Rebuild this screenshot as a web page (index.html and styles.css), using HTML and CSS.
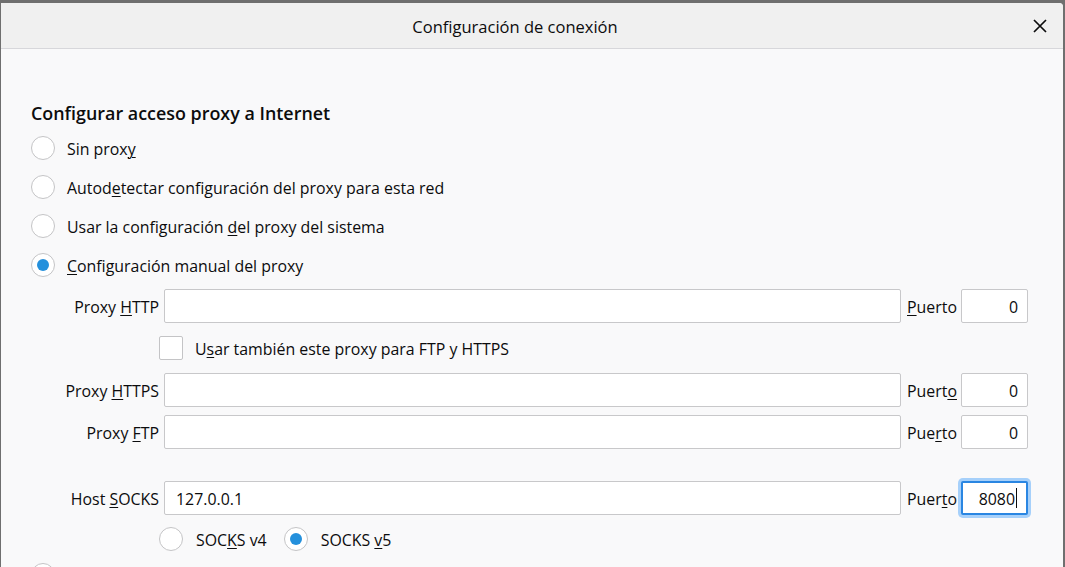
FILE: index.html
```html
<!DOCTYPE html>
<html lang="es">
<head>
<meta charset="utf-8">
<title>Configuración de conexión</title>
<link rel="stylesheet" href="styles.css">
</head>
<body>
<div class="dialog">
  <header class="titlebar">
    <h1 class="title">Configuración de conexión</h1>
    <button class="close" aria-label="Cerrar">
      <svg width="14" height="14" viewBox="0 0 14 14"><path d="M1 1 L13 13 M13 1 L1 13" stroke="#0c0c0d" stroke-width="1.7" fill="none"/></svg>
    </button>
  </header>
  <main class="content">
    <h2 class="section-title">Configurar acceso proxy a Internet</h2>
    <div class="radio-list">
      <div class="radio-row"><span class="radio"></span><span class="txt">Sin prox<u>y</u></span></div>
      <div class="radio-row"><span class="radio"></span><span class="txt">Autod<u>e</u>tectar configuración del proxy para esta red</span></div>
      <div class="radio-row"><span class="radio"></span><span class="txt">Usar la configuración <u>d</u>el proxy del sistema</span></div>
      <div class="radio-row"><span class="radio checked"></span><span class="txt"><u>C</u>onfiguración manual del proxy</span></div>
    </div>
    <div class="manual">
      <div class="proxy-row">
        <span class="field-label txt">Proxy <u>H</u>TTP</span>
        <span class="input"></span>
        <span class="port-label txt"><u>P</u>uerto</span>
        <span class="input port"><span class="txt">0</span></span>
      </div>
      <div class="check-row"><span class="checkbox"></span><span class="txt">U<u>s</u>ar también este proxy para FTP y HTTPS</span></div>
      <div class="proxy-row">
        <span class="field-label txt">Proxy <u>H</u>TTPS</span>
        <span class="input"></span>
        <span class="port-label txt">Puert<u>o</u></span>
        <span class="input port"><span class="txt">0</span></span>
      </div>
      <div class="proxy-row gap-small">
        <span class="field-label txt">Proxy <u>F</u>TP</span>
        <span class="input"></span>
        <span class="port-label txt">Pue<u>r</u>to</span>
        <span class="input port"><span class="txt">0</span></span>
      </div>
      <div class="proxy-row gap-large">
        <span class="field-label txt">Host <u>S</u>OCKS</span>
        <span class="input text"><span class="txt">127.0.0.1</span></span>
        <span class="port-label txt">Puer<u>t</u>o</span>
        <span class="input port focused"><span class="txt">8080</span><span class="caret"></span></span>
      </div>
      <div class="socks-row">
        <div class="radio-row"><span class="radio"></span><span class="txt">SOC<u>K</u>S v4</span></div>
        <div class="radio-row"><span class="radio checked"></span><span class="txt">SOCKS <u>v</u>5</span></div>
      </div>
    </div>
    <div class="radio-list tail">
      <div class="radio-row"><span class="radio"></span></div>
    </div>
  </main>
</div>
</body>
</html>
```

FILE: styles.css
```css
* { box-sizing: border-box; }
html, body { margin: 0; padding: 0; height: 100%; overflow: hidden; }
body {
  background: #6f6f6f;
  font-family: "Open Sans", "Noto Sans", sans-serif;
  font-size: 15.9px;
  color: #0c0c0d;
  padding: 3px 2px 0 1px;
}
.dialog {
  height: 100%;
  background: #f9f9fa;
  border-top-right-radius: 4px;
  overflow: hidden;
}
.titlebar {
  display: flex;
  align-items: center;
  height: 46px;
  background: #f0f0f0;
  border-bottom: 1px solid #d7d7db;
}
.title {
  flex: 1;
  margin: 0;
  padding-top: 1px;
  text-align: center;
  font-size: 16.5px;
  font-weight: 400;
}
.close {
  width: 22px;
  height: 22px;
  margin-right: 12px;
  padding: 0;
  border: 0;
  background: transparent;
  display: flex;
  align-items: center;
  justify-content: center;
}
.content {
  padding: 51px 35px 0 30px;
}
.section-title {
  margin: 0;
  font-size: 17.9px;
  font-weight: 600;
  line-height: 26px;
}
.txt { padding-top: 2px; }
.radio-list {
  display: flex;
  flex-direction: column;
  gap: 15px;
  margin-top: 10px;
}
.radio-list.tail { margin-top: 12px; }
.radio-row {
  display: flex;
  align-items: center;
  gap: 12px;
  height: 24px;
  white-space: nowrap;
}
.radio {
  width: 24px;
  height: 24px;
  flex: none;
  border-radius: 50%;
  border: 1px solid #c4c4c6;
  background: #fff;
  display: flex;
  align-items: center;
  justify-content: center;
}
.radio.checked::after {
  content: "";
  width: 12px;
  height: 12px;
  border-radius: 50%;
  background: #2490dc;
}
u { text-decoration-thickness: 1px; text-underline-offset: 2px; }
.manual { margin-top: 12px; }
.proxy-row {
  display: grid;
  grid-template-columns: 133px 1fr 60px 67px;
  align-items: center;
  height: 34px;
}
.proxy-row.gap-small { margin-top: 8px; }
.proxy-row.gap-large { margin-top: 32px; }
.field-label {
  text-align: right;
  padding-right: 5px;
  white-space: nowrap;
}
.port-label {
  padding-left: 6px;
  white-space: nowrap;
}
.input {
  height: 34px;
  background: #fff;
  border: 1px solid #c8c8ca;
  border-radius: 2px;
  display: flex;
  align-items: center;
}
.input.text { padding-left: 11px; }
.input.port {
  justify-content: flex-end;
  padding-right: 9px;
}
.input.focused {
  border: 2px solid #2a86e2;
  box-shadow: 0 0 0 3px #a6d0fa;
  padding-right: 9px;
}
.caret {
  width: 1px;
  height: 20px;
  background: #0c0c0d;
  margin-left: 1px;
}
.check-row {
  display: flex;
  align-items: center;
  gap: 12px;
  height: 24px;
  margin: 13px 0;
  padding-left: 128px;
}
.checkbox {
  width: 24px;
  height: 24px;
  border: 1px solid #c4c4c6;
  border-radius: 2px;
  background: #fff;
}
.socks-row {
  display: flex;
  gap: 17px;
  margin-top: 12px;
  padding-left: 128px;
}
.socks-row .radio-row { gap: 13px; }
```
